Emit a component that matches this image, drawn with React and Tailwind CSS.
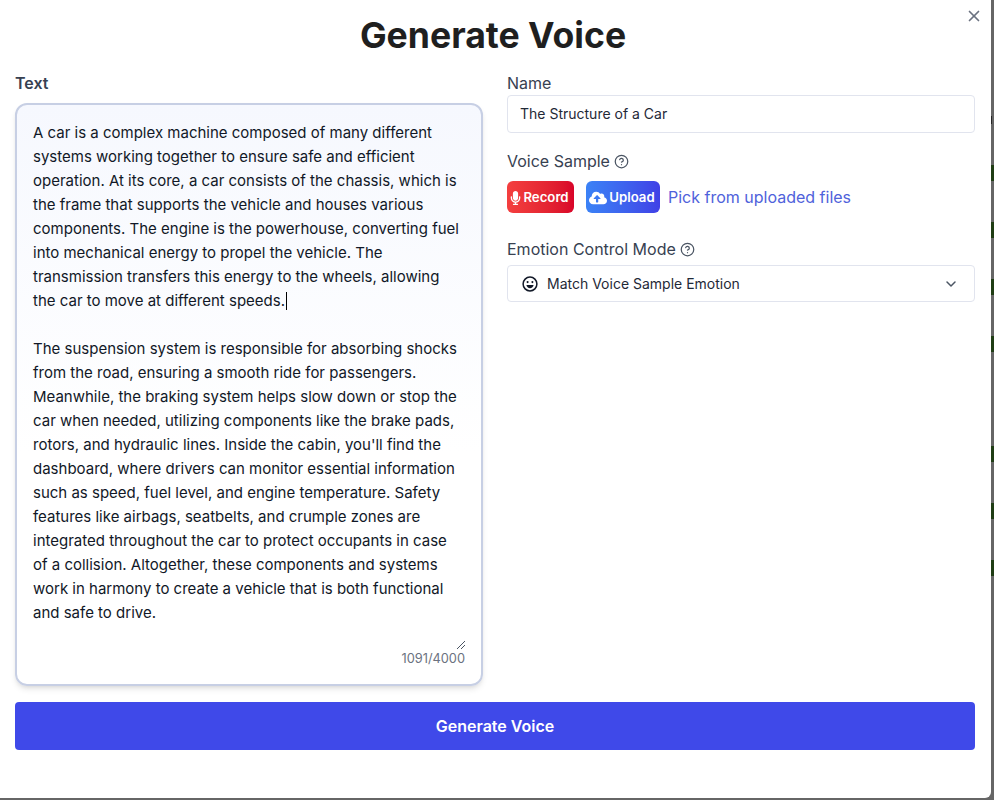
import { ChevronDown, CircleHelp, X } from "lucide-react";
import { FaCloudUploadAlt, FaMicrophone } from "react-icons/fa";

const para1 =
  "A car is a complex machine composed of many different systems working together to ensure safe and efficient operation. At its core, a car consists of the chassis, which is the frame that supports the vehicle and houses various components. The engine is the powerhouse, converting fuel into mechanical energy to propel the vehicle. The transmission transfers this energy to the wheels, allowing the car to move at different speeds.";
const para2 =
  "The suspension system is responsible for absorbing shocks from the road, ensuring a smooth ride for passengers. Meanwhile, the braking system helps slow down or stop the car when needed, utilizing components like the brake pads, rotors, and hydraulic lines. Inside the cabin, you'll find the dashboard, where drivers can monitor essential information such as speed, fuel level, and engine temperature. Safety features like airbags, seatbelts, and crumple zones are integrated throughout the car to protect occupants in case of a collision. Altogether, these components and systems work in harmony to create a vehicle that is both functional and safe to drive.";

const FieldLabel = ({ children, help }) => (
  <div className="flex items-center gap-1 text-base leading-6 text-[#374151]">
    {children}
    {help && <CircleHelp className="h-[15px] w-[15px] text-[#4b5563]" strokeWidth={2} />}
  </div>
);

const SmileIcon = () => (
  <svg className="h-4 w-4 text-[#111827]" viewBox="0 0 16 16" fill="none" stroke="currentColor">
    <circle cx="8" cy="8" r="6.9" strokeWidth="1.5" />
    <circle cx="5.6" cy="6.1" r="1.05" fill="currentColor" stroke="none" />
    <circle cx="10.4" cy="6.1" r="1.05" fill="currentColor" stroke="none" />
    <path d="M4.4 9.1h7.2c-.3 2-1.8 3.2-3.6 3.2s-3.3-1.2-3.6-3.2z" fill="currentColor" stroke="none" />
  </svg>
);

const App = () => (
  <div className="flex h-[800px] w-[994px] overflow-hidden bg-[#666666] font-['Inter',sans-serif]">
    <div className="relative flex h-[798px] w-[991px] shrink-0 flex-col rounded-br-md bg-white pl-[15px] pr-[16px]">
      <button className="absolute right-[8px] top-[7px] text-[#6b7280]">
        <X className="h-[18px] w-[18px]" strokeWidth={2.25} />
      </button>
      <h1 className="mt-[14px] pr-1 text-center text-[35.6px] leading-[44px] font-bold text-[#1f1f1f]">Generate Voice</h1>
      <div className="mt-[13px] grid h-[615px] grid-cols-2 gap-6">
        <div className="flex flex-col">
          <div className="h-8 text-base leading-6 font-semibold text-[#374151]">Text</div>
          <div className="relative h-[583px] rounded-xl border-2 border-[#c7cfe4] bg-gradient-to-b from-[#f6f8fe] to-white to-60% px-4 pt-4 text-[15px] leading-6 text-[#111827] shadow-md">
            <p>
              {para1}
              <span className="ml-px inline-block h-[18px] w-px bg-black align-text-bottom" />
            </p>
            <p className="mt-6">{para2}</p>
            <svg className="absolute bottom-[35px] right-4 h-2 w-2 text-[#4b5563]" viewBox="0 0 8 8" fill="none" stroke="currentColor">
              <path d="M0 8 8 0M4 8l4-4" />
            </svg>
            <span className="absolute bottom-[17px] right-4 text-[12.8px] leading-4 text-[#6b7280]">1091/4000</span>
          </div>
        </div>
        <div className="flex flex-col">
          <FieldLabel>Name</FieldLabel>
          <div className="flex h-[38px] items-center rounded border border-[#e1e4ee] px-3 text-sm text-[#1f2937]">The Structure of a Car</div>
          <div className="mt-4">
            <FieldLabel help>Voice Sample</FieldLabel>
          </div>
          <div className="mt-2 flex h-8 items-center">
            <span className="flex h-8 w-[67px] items-center justify-center gap-[2px] rounded-md bg-gradient-to-r from-[#f43f3f] to-[#d90429] pr-[2px] pt-px text-[13.2px] font-semibold text-white">
              <FaMicrophone className="h-[14px] w-[11px]" />
              Record
            </span>
            <span className="ml-3 flex h-8 w-[74px] items-center justify-center gap-[2px] rounded-md bg-gradient-to-r from-[#3b82f6] to-[#4040e6] pr-[2px] pt-px text-[13.2px] font-semibold text-white">
              <FaCloudUploadAlt className="h-[18px] w-[18px]" />
              Upload
            </span>
            <a className="ml-2 text-base text-[#4f62db]">Pick from uploaded files</a>
          </div>
          <div className="mt-6">
            <FieldLabel help>Emotion Control Mode</FieldLabel>
          </div>
          <div className="mt-1 flex h-[37px] items-center justify-between rounded border border-[#e1e4ee] pl-[14px] pr-[15px] text-sm text-[#1f2937]">
            <span className="flex items-center gap-[9px]">
              <SmileIcon />
              Match Voice Sample Emotion
            </span>
            <ChevronDown className="h-4 w-4 text-[#4b5563]" strokeWidth={2.25} />
          </div>
        </div>
      </div>
      <button className="mt-[16px] h-12 rounded bg-[#3f49e9] text-base font-semibold text-white">Generate Voice</button>
    </div>
    {/* bit of the page behind the modal */}
    <div className="flex w-[3px] flex-col">
      <div className="mt-[116px] h-2 w-px bg-[#222222]" />
      <div className="mt-[41px] h-4 bg-[#1f3d14]" />
      <div className="mt-[41px] h-4 bg-[#1f3d14]" />
      <div className="mt-[41px] h-4 bg-[#1f3d14]" />
      <div className="mt-[41px] h-4 bg-[#1f3d14]" />
      <div className="mt-[94px] h-4 bg-[#1f3d14]" />
      <div className="mt-[41px] h-4 bg-[#1f3d14]" />
      <div className="mt-[41px] h-4 bg-[#1f3d14]" />
    </div>
  </div>
);

export default App;
